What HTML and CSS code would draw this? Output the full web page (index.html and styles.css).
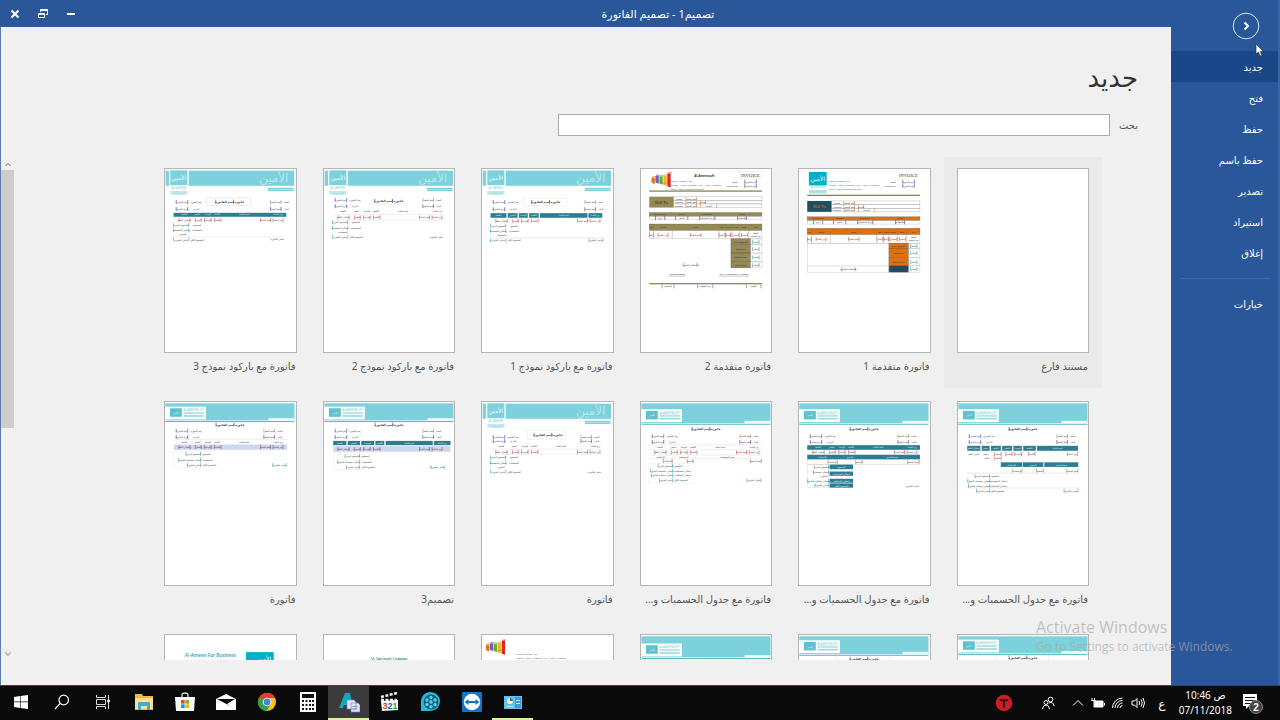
FILE: index.html
```html
<!DOCTYPE html>
<html lang="ar" dir="rtl">
<head>
<meta charset="utf-8">
<title>تصميم1 - تصميم الفاتورة</title>
<link rel="stylesheet" href="styles.css">
</head>
<body>
<div class="window">
  <nav class="sidebar" aria-label="ملف">
    <button class="back" aria-label="رجوع"><svg width="28" height="28" viewBox="0 0 28 28"><circle cx="14" cy="14" r="12.8"/><path class="bold" d="M12.500 10.500l3.500 3.500-3.500 3.500"/></svg></button>
    <a class="item active" href="#">جديد</a>
    <a class="item" href="#">فتح</a>
    <a class="item" href="#">حفظ</a>
    <a class="item" href="#">حفظ باسم</a>
    <a class="item" href="#">تصدير</a>
    <a class="item" href="#">استيراد</a>
    <a class="item" href="#">إغلاق</a>
    <hr class="divider">
    <a class="item" href="#">خيارات</a>
    <svg class="cursor" width="10" height="14" viewBox="0 0 10 14"><path d="M1 1v10l2.500-2 1.600 4 1.800-.8-1.600-3.700h3z"/></svg>
  </nav>
  <div class="main">
    <header class="titlebar">
      <h1 class="title">تصميم1 - تصميم الفاتورة</h1>
      <div class="controls">
        <button aria-label="تصغير"><svg width="12" height="12" viewBox="0 0 12 12"><path d="M2 6h8"/></svg></button>
        <button aria-label="استعادة"><svg width="12" height="12" viewBox="0 0 12 12"><path class="thin" d="M3.500 4V1.500h7v5H9M3.500 2.500h7M1.500 5.500h6v4h-6zM1.500 6.300h6"/></svg></button>
        <button aria-label="إغلاق"><svg width="12" height="12" viewBox="0 0 12 12"><path d="M2.500 2.500l7 7M9.500 2.500l-7 7"/></svg></button>
      </div>
    </header>
    <main class="content">
      <h2 class="heading">جديد</h2>
      <div class="search"><label for="q">بحث</label><input id="q" type="text"></div>
      <div class="browser">
        <div class="templates">
          <button class="card selected"><svg class="sheet" data-design="blank"></svg><span class="name">مستند فارغ</span></button>
          <button class="card"><svg class="sheet" data-design="advancedOrange"></svg><span class="name">فاتورة متقدمة 1</span></button>
          <button class="card"><svg class="sheet" data-design="advancedOlive"></svg><span class="name">فاتورة متقدمة 2</span></button>
          <button class="card"><svg class="sheet" data-design="barcode1"></svg><span class="name">فاتورة مع باركود نموذج 1</span></button>
          <button class="card"><svg class="sheet" data-design="barcode2"></svg><span class="name">فاتورة مع باركود نموذج 2</span></button>
          <button class="card"><svg class="sheet" data-design="barcode3"></svg><span class="name">فاتورة مع باركود نموذج 3</span></button>
          <button class="card"><svg class="sheet" data-design="discount1"></svg><span class="name">فاتورة مع جدول الحسميات و...</span></button>
          <button class="card"><svg class="sheet" data-design="discount2"></svg><span class="name">فاتورة مع جدول الحسميات و...</span></button>
          <button class="card"><svg class="sheet" data-design="discount3"></svg><span class="name">فاتورة مع جدول الحسميات و...</span></button>
          <button class="card"><svg class="sheet" data-design="invoice"></svg><span class="name">فاتورة</span></button>
          <button class="card"><svg class="sheet" data-design="design3"></svg><span class="name">تصميم3</span></button>
          <button class="card"><svg class="sheet" data-design="plain"></svg><span class="name">فاتورة</span></button>
          <button class="card" aria-label="قالب"><svg class="sheet" data-design="wide1"></svg></button>
          <button class="card" aria-label="قالب"><svg class="sheet" data-design="wide2"></svg></button>
          <button class="card" aria-label="قالب"><svg class="sheet" data-design="wide3"></svg></button>
          <button class="card" aria-label="قالب"><svg class="sheet" data-design="letter"></svg></button>
          <button class="card" aria-label="قالب"><svg class="sheet" data-design="company"></svg></button>
          <button class="card" aria-label="قالب"><svg class="sheet" data-design="business"></svg></button>
        </div>
        <div class="scrollbar" aria-hidden="true">
          <svg width="12" height="12" viewBox="0 0 12 12"><path d="M3.500 8L6 5.200 8.500 8"/></svg>
          <div class="track"><div class="thumb"></div></div>
          <svg width="12" height="12" viewBox="0 0 12 12"><path d="M3.500 4.500L6 7.300 8.500 4.500"/></svg>
        </div>
      </div>
    </main>
  </div>
</div>

<div class="watermark" dir="ltr"><p class="big">Activate Windows</p><p>Go to Settings to activate Windows.</p></div>

<footer class="taskbar" dir="ltr">
  <button class="task" aria-label="Start"><svg width="16" height="16" viewBox="0 0 16 16" fill="#fff"><path d="M1 3l6-1v5.600H1zM7.600 1.900L15 1v6.600H7.600zM1 8.300h6v5.600l-6-1zM7.600 8.300H15V15l-7.400-1z"/></svg></button>
  <button class="task" aria-label="Search"><svg width="16" height="16" viewBox="0 0 16 16" fill="none" stroke="#fff" stroke-width="1.200"><circle cx="9.700" cy="6" r="4.800"/><path d="M6.200 9.400L1 15"/></svg></button>
  <button class="task" aria-label="Task view"><svg width="16" height="16" viewBox="0 0 16 16" fill="none" stroke="#ddd"><path d="M1.500 1v2.500h9V1M1.500 15v-2.500h9V15M1.500 5.500h9v5h-9zM13.500 1v14M12.500 6h2v2h-2z"/></svg></button>
  <button class="task" aria-label="File Explorer"><svg width="20" height="18" viewBox="0 0 20 18"><path fill="#e9b94f" d="M1 1h7l1 2h10v14H1z"/><path fill="#fce08b" d="M1 5h18v11H1z"/><path fill="#42a9dd" d="M4 9h12v8h-3v-4H7v4H4z"/></svg></button>
  <button class="task" aria-label="Store"><svg width="20" height="20" viewBox="0 0 20 20"><path fill="none" stroke="#ddd" stroke-width="1.300" d="M7 5V3q0-2 3-2t3 2v2"/><path fill="#fff" d="M0 5h20l-1 14H1z"/><path fill="#e74c25" d="M6 8h3.700v3.700H6z"/><path fill="#7ab530" d="M10.300 8H14v3.700h-3.700z"/><path fill="#159bd7" d="M6 12.300h3.700V16H6z"/><path fill="#f6b800" d="M10.300 12.300H14V16h-3.700z"/></svg></button>
  <button class="task" aria-label="Mail"><svg width="22" height="18" viewBox="0 0 22 18"><path fill="#fff" d="M1 6l10-5 10 5v11H1z"/><path fill="#0a0a0a" d="M2 6h18l-8 5 5 3z"/></svg></button>
  <button class="task" aria-label="Chrome"><svg width="20" height="20" viewBox="0 0 20 20"><circle cx="10" cy="10" r="9" fill="#fbc116"/><path fill="#df3e31" d="M10 10L2.200 5.500A9 9 0 0 1 18.200 6H10z"/><path fill="#2ba24c" d="M2.200 5.500A9 9 0 0 0 9.700 19L13.500 12 10 10z"/><circle cx="10" cy="10" r="4.300" fill="#fff"/><circle cx="10" cy="10" r="3.400" fill="#4285d9"/></svg></button>
  <button class="task" aria-label="Calculator"><svg width="16" height="22" viewBox="0 0 16 22"><path fill="#fff" d="M0 1h16v20H0z"/><path fill="#111" d="M2 3h12v4H2zM2 9h2v2H2zm3.500 0h2v2h-2zm3.500 0h2v2H9zm3 0h2v2h-2zM2 13h2v2H2zm3.500 0h2v2h-2zm3.500 0h2v2H9zm3 0h2v2h-2zM2 17h2v2H2zm3.500 0h2v2h-2zm3.500 0h2v2H9zm3 0h2v2h-2z"/></svg></button>
  <button class="task open current" aria-label="Al-Ameen"><svg width="22" height="22" viewBox="0 0 22 22"><path fill="#12a9bd" d="M1 17L7 2h5l3 15h-5l-.5-3H6l-1 3z"/><path fill="#dfe6fa" stroke="#7788c4" stroke-width=".7" d="M9 9h7l2 2v7H9zM13 12h7l2 2v7h-9z"/><path stroke="#8b99cc" d="M14.500 15.500h5M14.500 18h5"/></svg></button>
  <button class="task" aria-label="Media Player Classic"><svg width="20" height="20" viewBox="0 0 20 20"><path stroke="#eee" stroke-width="2.500" stroke-dasharray="3 1.500" fill="none" d="M1 5l16-4M1 8h16"/><path fill="#fff" d="M1 9l17-1v10l-16 1z"/><text x="10" y="17" text-anchor="middle" font-family="Liberation Sans" font-weight="bold" font-size="9"><tspan fill="#d93a2b">3</tspan><tspan fill="#2559b4">2</tspan><tspan fill="#2d9b36">1</tspan></text></svg></button>
  <button class="task" aria-label="Video"><svg width="22" height="20" viewBox="0 0 22 20"><path fill="#29b7de" d="M1 19V10A9.500 9.500 0 1 1 10.500 19z"/><circle cx="11" cy="10" r="7.400" fill="#155f79"/><g fill="#53d3ef"><circle cx="11" cy="10" r="1.800"/><circle cx="11" cy="5.500" r="1.700"/><circle cx="15" cy="8" r="1.700"/><circle cx="15" cy="12.500" r="1.700"/><circle cx="11" cy="14.800" r="1.700"/><circle cx="7" cy="12.500" r="1.700"/><circle cx="7" cy="8" r="1.700"/></g></svg></button>
  <button class="task" aria-label="TeamViewer"><svg width="20" height="20" viewBox="0 0 20 20"><rect width="20" height="20" rx="1" fill="#1672cc"/><circle cx="10" cy="10" r="8.200" fill="#fff"/><path fill="#1672cc" d="M2.500 10l4-3v2h7V7l4 3-4 3v-2h-7v2z"/></svg></button>
  <button class="task open" aria-label="Settings panel"><svg width="18" height="14" viewBox="0 0 18 14"><rect width="18" height="13" y="1" fill="#62c2eb"/><path fill="#3b9dd2" d="M11 2h6v11h-6z"/><circle cx="6" cy="6" r="3" fill="#fff3b0"/><path fill="#2a6fb2" d="M6 6V3a3 3 0 0 1 3 3z"/><path stroke="#cdefff" d="M12 5.500h4M12 8.500h4M3 11.500h6"/></svg></button>

  <div class="tray">
    <svg class="badge" width="18" height="18" viewBox="0 0 18 18"><circle cx="9" cy="9" r="8.300" fill="#c91d2a"/><path d="M4 5.500q5-1 10 0-1 2-4 2v6.500H8V7.500q-3 0-4-2z" fill="#3a0d10"/></svg>
    <svg class="people" width="14" height="14" viewBox="0 0 14 14"><circle cx="9.500" cy="3.500" r="2.300"/><circle cx="5" cy="6.500" r="2"/><path d="M1.500 13q.5-4 3.500-4t3.500 4M8 7q4-2 5 3"/></svg>
    <svg width="14" height="14" viewBox="0 0 14 14"><path d="M2 9.500L7 4.500l5 5"/></svg>
    <svg class="battery" width="14" height="14" viewBox="0 0 14 14"><path fill="#fff" d="M3 5h9v6H3z"/><path d="M13.500 7v2.500M1 2v3M3.500 2v3M.5 4.500h4"/></svg>
    <svg width="14" height="14" viewBox="0 0 14 14"><path d="M1.500 12A10 10 0 0 1 11.500 2M4 12a7.500 7.500 0 0 1 7.500-7.500M6.500 12a5 5 0 0 1 5-5M9 12a2.500 2.500 0 0 1 2.500-2.500"/></svg>
    <svg width="14" height="14" viewBox="0 0 14 14"><path d="M1 5h2.500L6 2.500v9L3.500 9H1zM8 5q1.500 2 0 4M10 3.500q2.500 3.500 0 7M12 2q3 5 0 10"/></svg>
    <span class="lang">ع</span>
    <time class="clock" datetime="2018-11-07T10:46"><span dir="ltr">10:46 ص</span><span>07/11/2018</span></time>
    <svg class="notice" width="22" height="22" viewBox="0 0 22 22"><path fill="#fff" stroke="none" d="M1 2h14v12H7l-3 3v-3H1z"/><path stroke="#111" d="M3 5.500h10M3 8.500h10M3 11.500h6"/><circle cx="14" cy="15" r="6.500" fill="#444" stroke="#888"/><text x="14" y="19" text-anchor="middle" font-family="Liberation Sans" font-size="10" font-weight="bold" fill="#fff" stroke="none">2</text></svg>
  </div>
</footer>
<script src="designs.js"></script>
</body>
</html>
```
FILE: styles.css
```css
* { box-sizing: border-box; }
body {
  margin: 0;
  height: 100vh;
  display: flex;
  flex-direction: column;
  overflow: hidden;
  font-family: "Noto Sans", "DejaVu Sans", sans-serif;
  font-size: 10px;
  color: #555;
  background: #2a579a;
}
button { font: inherit; color: inherit; background: none; border: 0; padding: 0; }
h1, h2, p { margin: 0; font-weight: normal; }

.window { flex: 1; min-height: 0; display: flex; border-bottom: 1px solid #1e4680; }

.sidebar {
  position: relative;
  width: 109px;
  display: flex;
  flex-direction: column;
  background: #2a579a;
  border-right: 2px solid #3a64a3;
  color: #fff;
}
.back { height: 28px; margin: 12px 18px 11px; align-self: flex-start; }
.back svg { display: block; fill: none; stroke: #dce6f4; }
.back .bold { stroke: #fff; stroke-width: 2; }
.item {
  height: 31px;
  line-height: 32px;
  padding-right: 15px;
  color: #fff;
  text-decoration: none;
}
.item.active { background: #1a4788; }
.divider { width: 90px; margin: 10px 8px 9px; border: 0; border-top: 1px solid #3f69a8; }
.cursor { position: absolute; top: 43px; right: 13px; fill: #fff; stroke: #333; stroke-width: .7; }

.main { flex: 1; min-width: 0; display: flex; flex-direction: column; }
.titlebar { height: 27px; display: flex; align-items: center; color: #fff; }
.title { flex: 1; padding-left: 60px; text-align: center; font-size: 11px; }
.controls { display: flex; padding-left: 1px; }
.controls button { width: 28px; height: 26px; display: grid; place-items: center; }
.controls svg { fill: none; stroke: #fff; stroke-width: 2; }
.controls .thin { stroke-width: 1; }

.content {
  flex: 1;
  min-height: 0;
  display: flex;
  flex-direction: column;
  padding-bottom: 25px;
  background: #f0f0f0;
  border-left: 1px solid #5a7cae;
}
.heading { padding: 28px 33px 0; height: 87px; font-size: 26px; line-height: 44px; color: #333; }
.search { display: flex; align-items: center; gap: 9px; padding: 0 33px; height: 22px; }
.search input { width: 50%; height: 22px; border: 1px solid #aaa; background: #fff; padding: 0 6px; }

.browser { flex: 1; min-height: 0; display: flex; overflow: hidden; margin-top: 21px; }
.templates {
  flex: 1;
  display: grid;
  grid-template-columns: repeat(auto-fill, minmax(158px, 1fr));
  align-content: start;
  gap: 2px 0;
  padding: 0 69px 0 137px;
}
.card { display: flex; flex-direction: column; align-items: center; padding: 11px 13px 10px; justify-content: flex-start; }
.card.selected { background: #eaeaea; }
.sheet { width: 100%; display: block; background: #fff; border: 1px solid #b5b5b5; }
.name { align-self: stretch; height: 25px; line-height: 26px; text-align: right; padding-right: 1px; white-space: nowrap; }

.scrollbar { width: 13px; display: flex; flex-direction: column; align-items: center; padding-top: 1px; }
.scrollbar svg { fill: none; stroke: #777; }
.track { flex: 1; width: 100%; }
.thumb { height: 54%; background: #cdcdcd; }

.sheet text { font-size: 7px; text-anchor: middle; fill: #333; direction: rtl; }
.sheet .latin { direction: ltr; text-anchor: start; font-size: 7px; fill: #467; }
.sheet .strong { font-size: 9px; font-weight: bold; }
.sheet .light { fill: #e8f5f7; font-size: 7px; }
.sheet .serif { font-family: "Liberation Serif", serif; font-size: 14px; }
.sheet .logo { fill: #e4fbfd; font-size: 18px; }
.sheet .script { fill: #b7e7ec; font-size: 36px; }
.sheet .soft { fill: #7fcdd5; font-size: 9px; }
.sheet .brand { fill: #1fa7b6; font-size: 14px; font-weight: 600; }
.sheet .firm { fill: #3a8f9c; font-family: "Liberation Serif", serif; font-size: 11px; font-weight: bold; }

.watermark { position: absolute; left: 1036px; top: 616px; color: #aaaaaab0; font-family: "Open Sans", sans-serif; font-size: 12px; line-height: 18px; }
.watermark .big { font-size: 16px; line-height: 22px; }

.taskbar { height: 34px; display: flex; background: #0a0a0a; color: #fff; }
.task { width: 41px; display: grid; place-items: center; border-bottom: 2px solid transparent; }
.task.open { border-bottom-color: #dff09b; }
.task.current { background: #3b3b3b; }
.tray { flex: 1; display: flex; align-items: center; justify-content: flex-end; gap: 6px; padding-right: 16px; }
.tray svg { fill: none; stroke: #fff; }
.tray .badge { stroke: none; margin-right: 22px; }
.tray .people { margin-right: 10px; }
.lang { width: 22px; text-align: center; font-size: 12px; }
.clock { display: grid; text-align: center; line-height: 15px; }
.tray .notice { margin-left: 4px; }
```
FILE: designs.js
```js
// Builders for the invoice previews; every sheet is 396 x 555 units.
const TEAL = '#2b7d92', AQUA = '#7dd1dc', RED = '#e0524f', BLUE = '#4a45c4', CYAN = '#38b2bd', ORANGE = '#d9904a';

const rect = (x, y, w, h, fill, stroke = 'none') =>
  `<rect x="${x}" y="${y}" width="${w}" height="${h}" fill="${fill}" stroke="${stroke}"/>`;
const line = (x1, y1, x2, y2, color = '#ccc') =>
  `<line x1="${x1}" y1="${y1}" x2="${x2}" y2="${y2}" stroke="${color}"/>`;
const text = (x, y, value, cls = '') => `<text x="${x}" y="${y}" class="${cls}">${value}</text>`;
// A bound field: its value between two coloured brackets.
const field = (x1, x2, y, value, color) =>
  `<path d="M${x1} ${y - 6}v12M${x2} ${y - 6}v12" stroke="${color}" stroke-width="2" fill="none"/>` +
  (value ? text((x1 + x2) / 2, y + 3, value) : '');
const bars = (y, h, cells) => cells.map(([x1, x2, label]) =>
  rect(x1, y, x2 - x1, h, TEAL) + text((x1 + x2) / 2, y + h / 2 + 3, label, 'light')).join('');
const labels = (y, cells) => cells.map(([x, label]) => text(x, y + 3, label)).join('');
const fields = (y, color, cells) => cells.map(([x1, x2, label]) => field(x1, x2, y, label, color)).join('');

const scriptBanner = () =>
  rect(2, 5, 390, 46, AQUA) + rect(12, 3, 60, 50, '#fff') + rect(16, 4, 52, 45, AQUA) +
  text(42, 34, 'الأمين', 'logo') + text(330, 40, 'الأمين', 'script') +
  text(42, 61, 'AL-AMEEN', 'soft') + rect(16, 66, 52, 12, '#c4eaee') + text(42, 75, 'البرمجيات', 'soft') +
  rect(312, 57, 78, 10, AQUA) + text(351, 65, 'www.alameensoft.com', 'light');

const wideBanner = (h = 60) =>
  rect(1, 4, 392, h, AQUA) + rect(1, h + 6, 392, 3, '#54b6c1') +
  rect(0, h - 38, 124, 39, '#fff') + rect(15, h - 33, 36, 26, '#5fc2ce') + text(33, h - 16, 'الأمين', 'light') +
  text(87, h - 25, 'ALAMEENSOFT', 'soft') + rect(56, h - 22, 62, 7, '#b9e4e8') + rect(56, h - 12, 62, 5, '#9ed8df') +
  rect(314, h - 3, 79, 8, '#edfafa');

const title = (x, y) => field(x - 42, x + 12, y, '', BLUE) + text(x, y + 4, 'فاتورة اسم الفاتورة', 'strong');
const details = (y1, y2, right = 332) =>
  [[y1, 'رقم الفاتورة', 'السيد'], [y2, 'التاريخ', 'البيان']].map(([y, a, b], i) =>
    field(34, 69, y, i ? 'تاريخ الفاتورة' : 'رقم الفاتورة', BLUE) + text(95, y + 3, a) +
    field(right - 32, right, y, 'اسم العميل', i ? BLUE : ORANGE) + text(right + 16, y + 3, b)).join('');
const summary = rows => rows.map(([y, label, value]) =>
  text(97, y + 3, label) + field(26, 72, y, value, CYAN)).join('');

const COLUMNS = [[58, 'القيمة'], [98, 'السعر'], [130, 'الوحدة'], [158, 'الكمية'], [240, 'اسم المادة'], [344, 'رمز المادة']];
const VALUES = [[42, 76, 'إجمالي القلم'], [92, 110, 'السعر'], [120, 140, 'الوحدة'], [150, 170, 'الكمية'], [290, 320, 'اسم المادة'], [328, 358, 'رمز المادة']];
const TOTALS = [['المجموع', 'المجموع الجزئي'], ['الحسميات', 'إجمالي الحسميات'], ['المجموع الكلي', 'صافي الفاتورة']];
const totals = (...ys) => summary(ys.map((y, i) => [y, ...TOTALS[i]]));

// Five coloured blocks on a rising curve, each with a lighter top face.
const chartLogo = (x, y) => [['#e87a22', '#f5b06c', 12, 20], ['#7a5bc0', '#ad98e0', 7, 24], ['#5cb531', '#a0dc7c', 8, 26], ['#f4b51c', '#fbdc80', 5, 33], ['#d8242c', '#f0787c', 0, 42]]
  .map(([front, top, dy, h], i) =>
    `<path d="M${x + i * 12} ${y + dy + 4}h10v${h}l-10-4z" fill="${front}"/><path d="M${x + i * 12} ${y + dy + 4}l3-4h11l-3 4z" fill="${top}"/>`).join('') +
  `<path d="M${x} ${y + 24}q18-4 30 6t30-8" stroke="#8a5a2a" fill="none"/>`;
const address = (x, y) => text(x, y, 'Street Address , city ,', 'latin') +
  text(x, y + 12, 'Phone : +963 11 222222 , Fax : +963 11 222222', 'latin') + text(x, y + 24, 'Email : info@alameensoft.com', 'latin');

function advanced(fill, dark, dy, logo) {
  const y = n => n + dy;
  let s = logo + address(91, 40) + text(332, 24, 'INVOICE', 'serif invoice') + text(286, 41, 'Date') + text(276, 54, 'Invoice No') +
    field(315, 350, 38, 'تاريخ الفاتورة', BLUE) + field(315, 350, 51, 'رقم الفاتورة', BLUE) + rect(25, y(78), 342, 4, '#8a8458');
  s += rect(25, y(97), 74, 33, dark) + `<text x="62" y="${y(118)}" class="serif" style="fill:${dark === fill ? '#222' : fill}">Bill To</text>`;
  ['Name', 'Address', 'Contact'].forEach((label, i) => {
    const row = 97 + i * 11;
    s += rect(99, y(row), 268, 11, 'none', '#999') + text(115, y(row + 9), label) + field(136, 168, y(row + 6), 'اسم العميل', ORANGE);
    if (i) s += field(180, i === 1 ? 196 : 230, y(row + 6), 'المدينة', ORANGE);
  });
  s += rect(25, y(145), 342, 11, fill, '#765') + rect(25, y(156), 342, 11, 'none', '#aaa') +
    [[58, 'Order Date'], [123, 'Terms'], [200, 'Due Date'], [306, 'Notes']].map(([x, t]) => text(x, y(153), t)).join('') +
    fields(y(162), BLUE, [[44, 72, 'تاريخ'], [105, 142, 'الدفع'], [178, 224, 'تاريخ الاستحقاق'], [293, 320, 'ملاحظات']]);
  s += rect(25, y(180), 342, 19, fill, '#654') + rect(25, y(199), 342, 26, 'none', '#aaa');
  [38, 95, 236, 256, 273, 300, 327].forEach(x => { s += line(x, y(180), x, y(225), '#875'); });
  s += [[31, 'No'], [67, 'Code'], [165, 'Item'], [246, 'Qty'], [265, 'Unit'], [286, 'Price'], [313, 'Disc'], [348, 'Net']]
    .map(([x, t]) => text(x, y(193), t)).join('') +
    fields(y(213), RED, [[26, 37, 'رقم'], [52, 82, 'رمز المادة'], [150, 182, 'اسم المادة'], [237, 255, 'كمية'], [258, 271, 'وحدة'], [276, 297, 'السعر'], [305, 323, 'حسم']]) +
    text(348, y(210), 'المبلغ') + text(348, y(219), 'بعد الحسم');
  [[225, 17, 'المجموع Total'], [242, 26, 'Discount'], [268, 26, 'Extra إضافة'], [294, 19, 'المبلغ Total']].forEach(([top, h, label], i) => {
    s += rect(273, y(top), 59, h, i === 3 ? dark : fill, '#644') + text(302, y(top + h / 2 + 3), label) +
      rect(332, y(top), 35, h, 'none', '#aaa') + fields(y(top + h / 2), CYAN, [[338, 358, 'إجمالي']]);
  });
  return s;
}

const designs = {
  blank: '',
  advancedOrange: advanced('#e0700f', '#1f4e5f', 0,
    rect(30, 9, 54, 41, '#00b0c8') + text(57, 35, 'الأمين', 'logo') + text(57, 59, 'AL-AMEEN', 'soft') + rect(30, 64, 54, 10, '#a9e0e7')) +
    rect(25, 225, 248, 88, 'none', '#aaa') + line(25, 294, 273, 294, '#999') + field(130, 170, 304, 'ملاحظات الفاتورة', CYAN),
  advancedOlive: advanced('#948a54', '#948a54', -13, chartLogo(32, 10) + text(192, 24, 'Al-Ameensoft', 'strong')) +
    rect(298, 8, 69, 18, 'none', '#ccc') + field(130, 170, 290, 'ملاحظات الفاتورة', CYAN) +
    text(110, 323, 'Received Date') + text(282, 323, 'For Al-Hesanieya Al-Ameen') + line(84, 325, 136, 325, '#555') + line(237, 325, 327, 325, '#555') +
    rect(25, 346, 342, 4, '#948a54') + fields(356, '#777', [[64, 100, 'المستلم'], [172, 218, 'رقم الصفحة'], [320, 364, 'التوقيع']]),
  barcode1: scriptBanner() + rect(126, 89, 134, 22, 'none', '#ddd') + title(193, 100) + details(100, 122, 344) +
    bars(134, 14, [[26, 74, 'القيمة'], [78, 108, 'السعر'], [112, 139, 'الوحدة'], [143, 172, 'الكمية'], [176, 320, 'اسم المادة'], [323, 365, 'رمز المادة']]) +
    fields(157, RED, VALUES) + totals(172, 188, 217) + text(60, 204, 'الحسميات') + line(26, 209, 368, 209, '#9cc') + field(325, 367, 217, 'صافي الفاتورة', CYAN),
  barcode2: scriptBanner() + title(196, 97) + line(140, 107, 250, 107) + details(94, 113) + labels(129, COLUMNS) + line(34, 138, 362, 138) +
    fields(147, RED, VALUES) + line(34, 155, 362, 155) + totals(162, 178, 206) + text(58, 193, 'الحسميات') + text(341, 209, 'صافي الفاتورة'),
  barcode3: scriptBanner() + rect(127, 88, 132, 22, 'none', '#bbb') + title(196, 99) + details(100, 121, 352) +
    rect(26, 133, 342, 12, TEAL) + COLUMNS.map(([x, t]) => text(x, 141, t, 'light')).join('') + fields(155, RED, VALUES) +
    totals(170, 186, 214) + text(54, 201, 'الفاتورة') + line(26, 206, 362, 206) + text(341, 216, 'صافي الفاتورة'),
  discount1: wideBanner() + title(197, 82) + details(104, 121) +
    bars(133, 15, [[28, 68, 'إجمالي القلم'], [72, 96, 'حسم'], [100, 130, 'القيمة'], [134, 164, 'السعر'], [168, 194, 'الوحدة'], [198, 236, 'الكمية'], [240, 364, 'اسم المادة']]) +
    fields(158, RED, [[110, 131, 'إجمالي'], [145, 164, 'السعر'], [172, 193, 'الوحدة'], [214, 234, 'الكمية'], [332, 362, 'رمز المادة']]) +
    field(110, 131, 171, 'القلم', RED) + text(48, 161, 'صافي القلم') + text(85, 161, 'حسم') + text(88, 173, 'القلم') +
    bars(183, 14, [[130, 195, 'الإضافات'], [197, 259, 'الحسم'], [262, 365, 'اسم الحسم']]) +
    fields(208, '#a98467', [[166, 194, 'الإضافات'], [238, 259, 'الحسم'], [330, 364, 'اسم الحسم']]) +
    line(25, 216, 366, 216, '#bbb') +
    text(113, 228, 'المجموع') + text(124, 243, 'إجمالي الحسميات') + text(124, 257, 'إجمالي الإضافات') + text(120, 272, 'المجموع الكلي') +
    fields(225, CYAN, [[52, 96, 'المجموع الجزئي']]) + fields(239, CYAN, [[30, 96, 'إجمالي حسميات الفاتورة']]) + fields(254, CYAN, [[32, 96, 'إجمالي إضافات الفاتورة']]) +
    line(25, 261, 366, 261, '#9cc') + fields(269, CYAN, [[56, 96, 'صافي الفاتورة'], [322, 364, 'صافي الفاتورة']]),
  discount2: wideBanner() + title(197, 82) + details(104, 121) +
    rect(25, 131, 342, 14, TEAL) + COLUMNS.map(([x, t]) => text(x, 141, t, 'light')).join('') + fields(152, RED, VALUES) +
    rect(25, 160, 342, 14, TEAL) + text(70, 170, 'الإضافات', 'light') + text(155, 170, 'الحسم', 'light') + text(282, 170, 'اسم الحسم', 'light') +
    rect(25, 174, 342, 15, 'none', '#bbb') + fields(182, '#a98467', [[88, 116, 'الإضافات'], [172, 192, 'الحسم'], [330, 364, 'اسم الحسم']]) +
    bars(190, 14, [[93, 164, 'المجموع']]) + bars(211, 13, [[93, 164, 'إجمالي الحسميات']]) + bars(233, 12, [[93, 164, 'إجمالي الإضافات']]) + bars(247, 13, [[93, 164, 'المجموع الكلي']]) +
    rect(26, 190, 64, 70, 'none', '#ccc') +
    fields(197, CYAN, [[46, 90, 'المجموع الجزئي']]) + fields(213, CYAN, [[44, 90, 'إجمالي حسميات']]) + text(76, 228, 'الفاتورة') +
    fields(239, CYAN, [[27, 90, 'إجمالي إضافات الفاتورة']]) + fields(253, CYAN, [[48, 90, 'صافي الفاتورة']]) + text(344, 257, 'صافي الفاتورة'),
  discount3: wideBanner() + title(197, 82) + details(104, 121) + line(24, 130, 366, 130) + labels(138, COLUMNS) + line(24, 145, 366, 145) +
    fields(153, RED, VALUES) + line(24, 161, 366, 161) + text(60, 169, 'الإضافات') + text(130, 169, 'الحسميات') + text(262, 169, 'اسم الحسميات') +
    line(24, 172, 366, 172) + fields(179, '#a98467', [[68, 95, 'الإضافات'], [140, 158, 'الحسم'], [332, 365, 'اسم الحسم']]) +
    rect(24, 186, 139, 60, 'none', '#ddd') +
    text(113, 196, 'المجموع') + text(127, 211, 'إجمالي الحسميات') + text(127, 226, 'إجمالي الإضافات') + text(121, 241, 'المجموع الكلي') +
    fields(193, CYAN, [[52, 96, 'المجموع الجزئي']]) + fields(208, CYAN, [[30, 96, 'إجمالي حسميات الفاتورة']]) + fields(223, CYAN, [[32, 96, 'إجمالي إضافات الفاتورة']]) +
    fields(238, CYAN, [[56, 96, 'صافي الفاتورة'], [322, 364, 'صافي الفاتورة']]),
  invoice: scriptBanner() + rect(139, 86, 114, 27, 'none', '#ddd') + title(200, 99) + details(106, 119) + labels(134, COLUMNS) + line(26, 143, 362, 143) +
    fields(151, RED, VALUES) + line(26, 158, 362, 158) + totals(168, 184, 211) + text(58, 200, 'الفاتورة') + text(341, 214, 'صافي الفاتورة'),
  design3: wideBanner(52) + title(197, 68) + details(87, 106) +
    bars(118, 13, [[28, 68, 'القيمة'], [72, 109, 'السعر'], [113, 152, 'الوحدة'], [156, 183, 'الكمية'], [187, 330, 'اسم المادة'], [334, 384, 'رمز المادة']]) +
    rect(28, 134, 356, 17, '#cdd8ee') + fields(143, '#9b3f67', VALUES) + rect(28, 155, 80, 50, 'none', '#ddd') +
    text(126, 166, 'المجموع') + text(130, 184, 'الحسميات') + text(134, 201, 'المجموع الكلي') +
    fields(163, CYAN, [[64, 108, 'المجموع الجزئي']]) + fields(181, CYAN, [[42, 108, 'إجمالي حسميات الفاتورة']]) + fields(198, CYAN, [[68, 108, 'صافي الفاتورة'], [324, 365, 'صافي الفاتورة']]),
  plain: wideBanner(52) + title(197, 68) + details(87, 106) + line(27, 113, 370, 113) + labels(122, COLUMNS) +
    rect(27, 129, 343, 16, '#cdd8ee') + fields(137, '#9b3f67', VALUES) + rect(27, 149, 80, 50, 'none', '#ddd') +
    text(126, 160, 'المجموع') + text(130, 178, 'الحسميات') + text(134, 194, 'المجموع الكلي') +
    fields(157, CYAN, [[64, 108, 'المجموع الجزئي']]) + fields(175, CYAN, [[42, 108, 'إجمالي حسميات الفاتورة']]) + fields(191, CYAN, [[68, 108, 'صافي الفاتورة'], [327, 368, 'صافي الفاتورة']]),
  wide1: wideBanner(52) + title(197, 68) + line(116, 62, 116, 90) + line(276, 62, 276, 90),
  wide2: wideBanner(54) + line(116, 64, 116, 90) + line(276, 64, 276, 90) + title(197, 72),
  wide3: wideBanner(64),
  letter: chartLogo(12, 14) + address(104, 60),
  company: text(197, 76, 'Al-Ameensoft Company', 'firm'),
  business: text(138, 68, 'Al-Ameen For Business', 'brand') + rect(246, 52, 84, 60, '#00b0c8') + text(300, 78, 'الأمين', 'logo'),
};

document.querySelectorAll('.sheet').forEach(sheet => {
  sheet.setAttribute('viewBox', '0 0 396 555');
  sheet.innerHTML = designs[sheet.dataset.design];
});
```
